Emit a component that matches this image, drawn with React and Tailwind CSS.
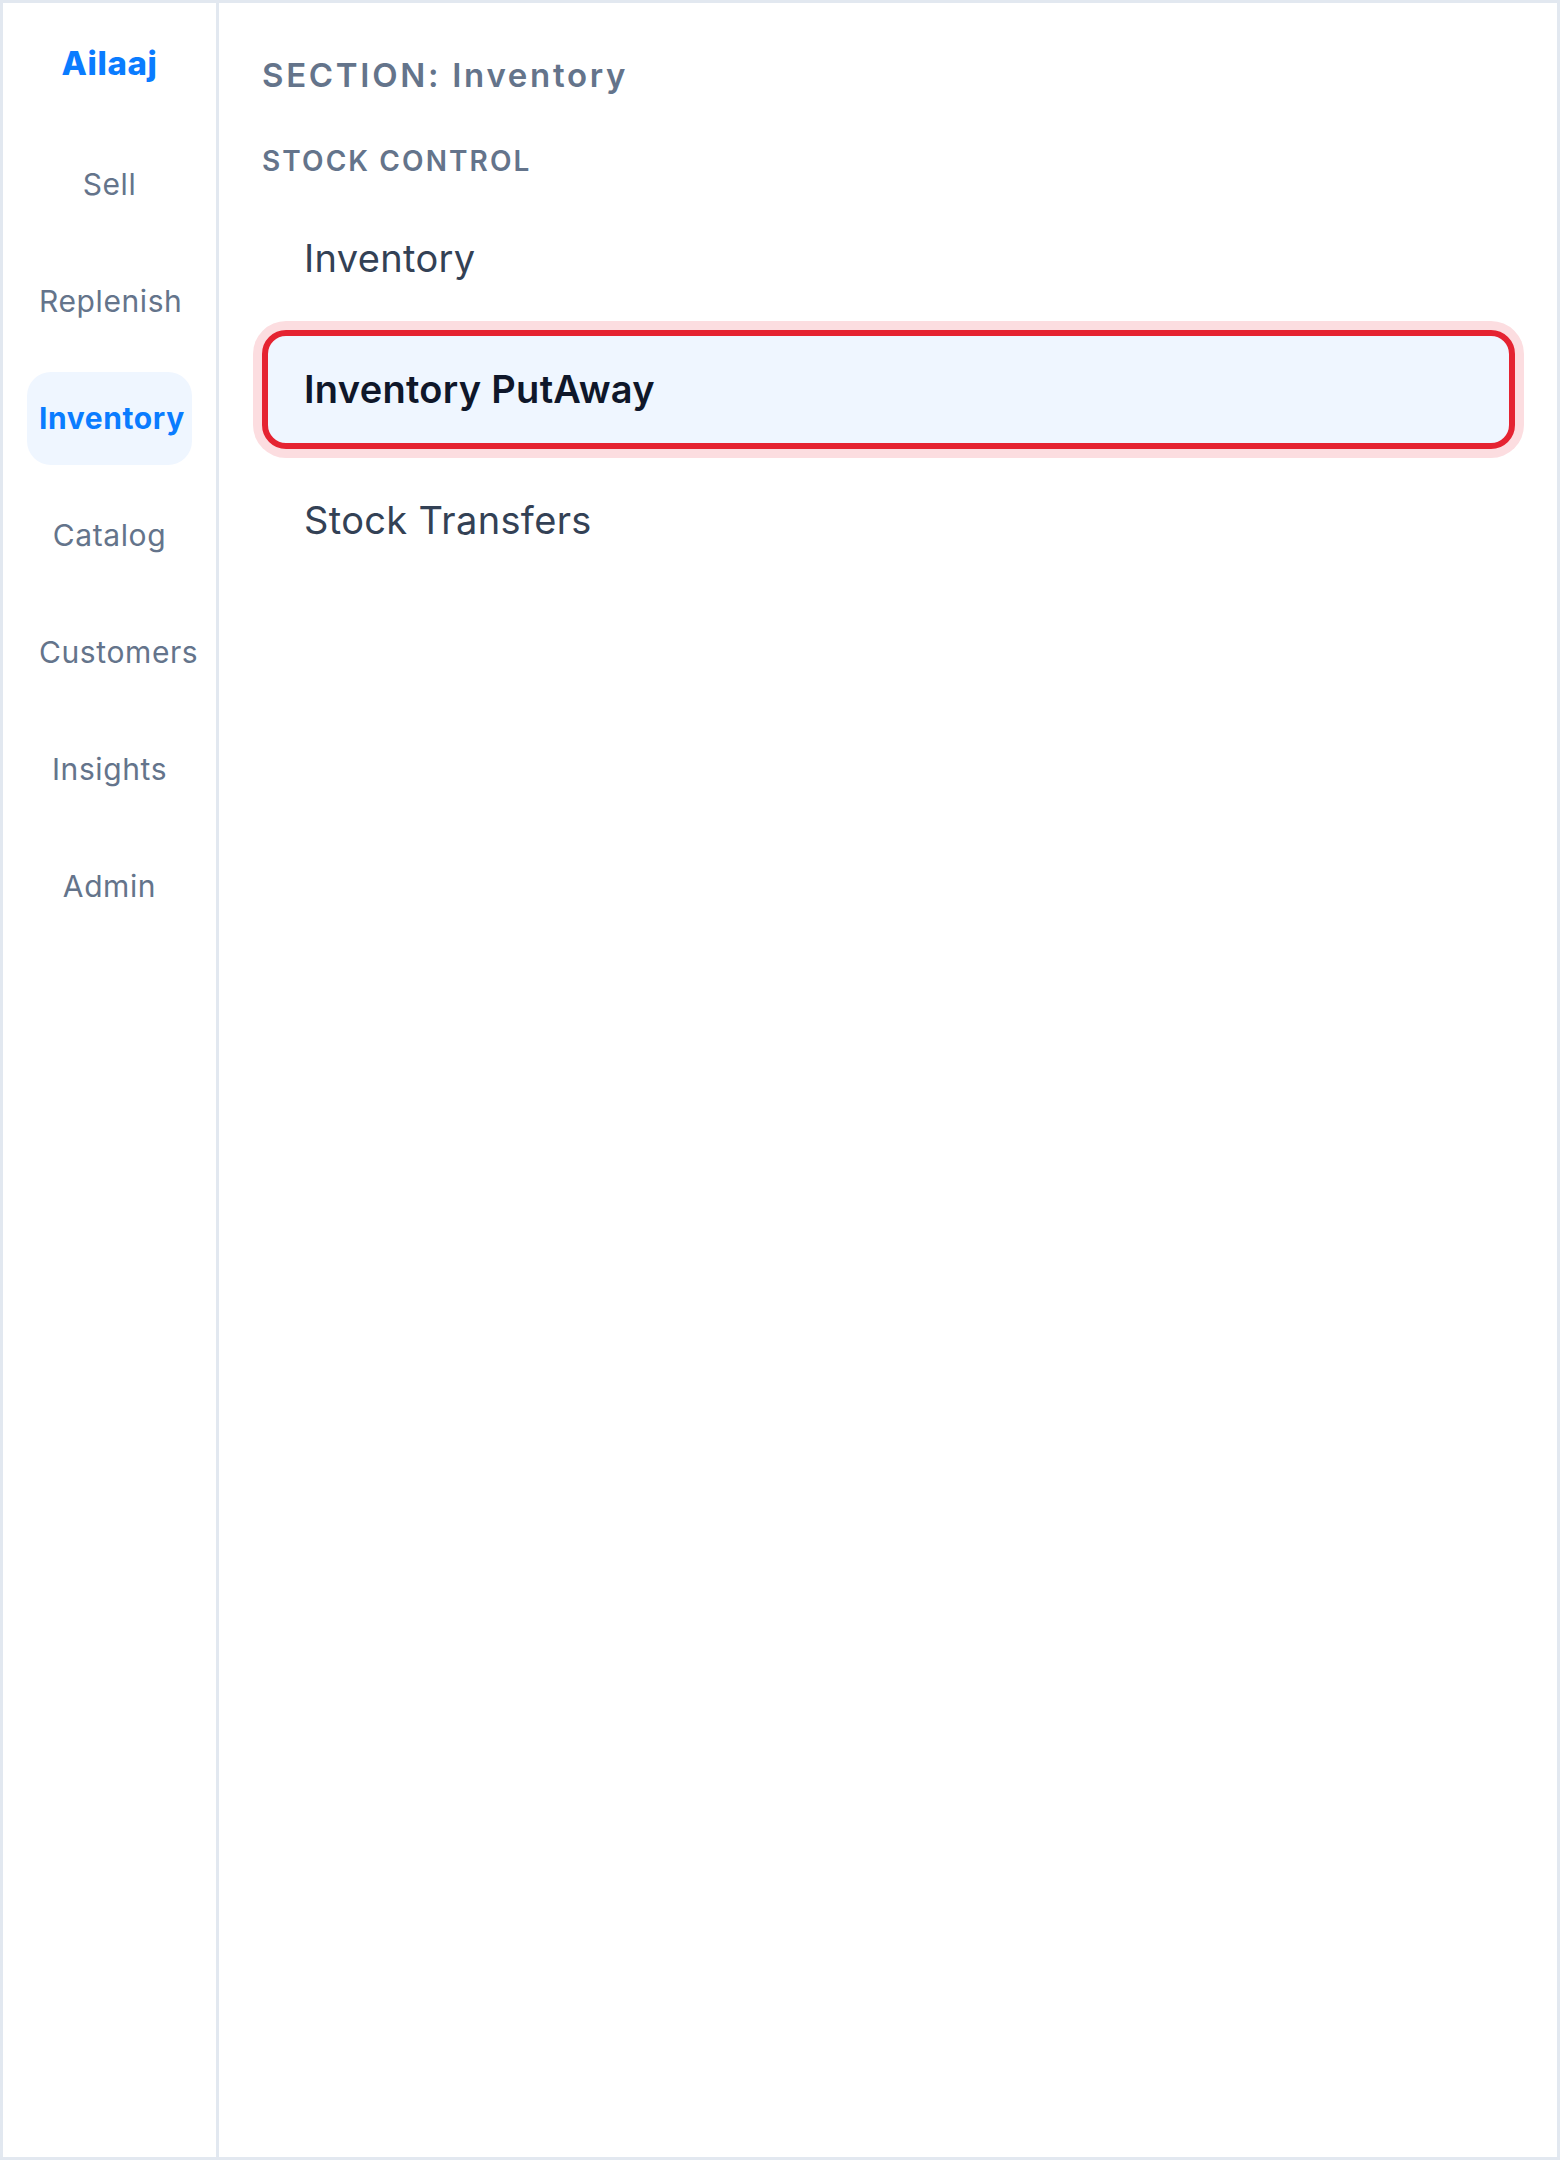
import React from "react";

const navItems = ["Sell", "Replenish", "Inventory", "Catalog", "Customers", "Insights", "Admin"];

export default function App() {
  return (
    <div
      className="w-[1560px] h-[2160px] border-[3px] border-[#e2e8f0] bg-white flex"
      style={{ fontFamily: "Inter, 'Noto Sans', sans-serif" }}
    >
      <aside className="w-[216px] shrink-0 border-r-[3px] border-[#e2e8f0] px-[24px] pt-[36px] flex flex-col">
        <div className="text-[33px] leading-[49.5px] font-extrabold tracking-[0.6px] text-center text-[#0a7cff] mb-[49.5px]">
          Ailaaj
        </div>
        <nav className="flex flex-col gap-[24px]">
          {navItems.map((item) =>
            item === "Inventory" ? (
              <div
                key={item}
                className="px-[12px] py-[24px] text-[30px] leading-[45px] tracking-[0.6px] text-center whitespace-nowrap rounded-[24px] bg-[#eff6ff] text-[#0a7cff] font-bold"
              >
                {item}
              </div>
            ) : (
              <div
                key={item}
                className="px-[12px] py-[24px] text-[30px] leading-[45px] tracking-[0.6px] text-center whitespace-nowrap rounded-[24px] text-[#64748b]"
              >
                {item}
              </div>
            )
          )}
        </nav>
      </aside>
      <main className="flex-1 pl-[43px] pr-[42px] pt-[48px] flex flex-col">
        <div className="text-[33px] leading-[49.5px] font-semibold tracking-[2.7px] text-[#64748b] mb-[39px]">
          SECTION: Inventory
        </div>
        <div className="text-[28px] leading-[42px] font-semibold tracking-[2.1px] text-[#64748b] mb-[17px]">
          STOCK CONTROL
        </div>
        <div className="flex flex-col gap-[12px]">
          <div className="border-[6px] border-transparent rounded-[24px] px-[36px] py-[24px] text-[38px] leading-[59px] tracking-[0.35px] text-[#334155]">
            Inventory
          </div>
          <div className="border-[6px] border-[#e52331] rounded-[24px] px-[36px] py-[24px] text-[38px] leading-[59px] tracking-[0.3px] font-semibold text-[#0f172a] bg-[#eff6ff] shadow-[0_0_0_9px_#fcdde0]">
            Inventory PutAway
          </div>
          <div className="border-[6px] border-transparent rounded-[24px] px-[36px] py-[24px] text-[38px] leading-[59px] tracking-[0.35px] text-[#334155]">
            Stock Transfers
          </div>
        </div>
      </main>
    </div>
  );
}
